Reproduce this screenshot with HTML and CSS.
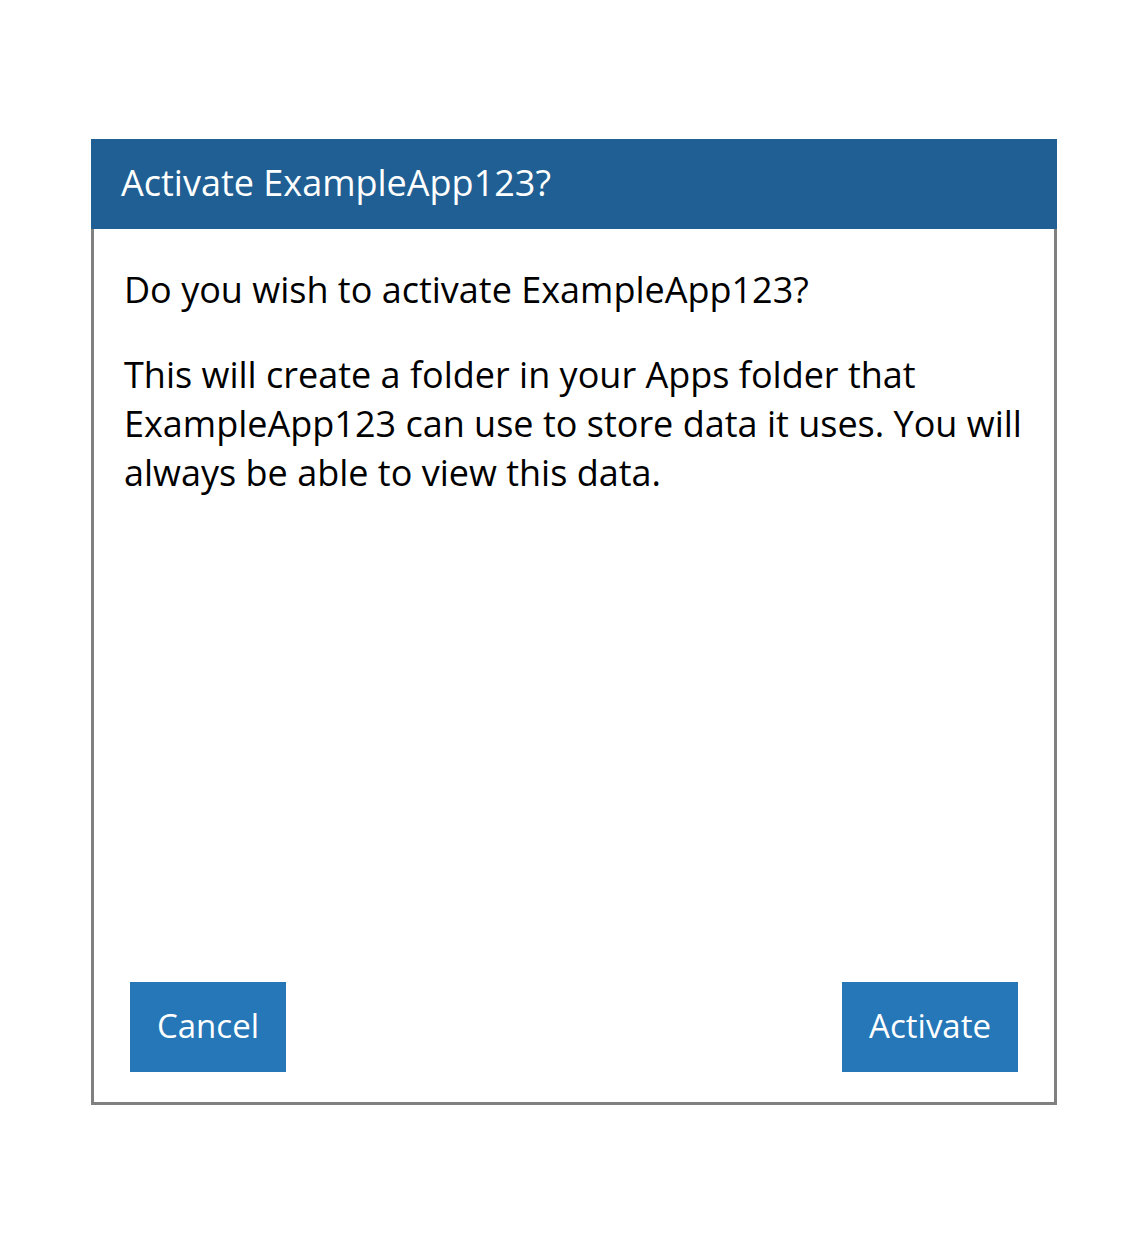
FILE: index.html
```html
<!DOCTYPE html>
<html>
<head>
<meta charset="utf-8">
<link rel="stylesheet" href="styles.css">
</head>
<body>
<div class="dialog">
  <div class="dialog-header">Activate ExampleApp123?</div>
  <div class="dialog-body">
    <div class="dialog-content">
      <p>Do you wish to activate ExampleApp123?</p>
      <p>This will create a folder in your Apps folder that ExampleApp123 can use to store data it uses. You will always be able to view this data.</p>
    </div>
    <div class="dialog-footer">
      <button class="btn">Cancel</button>
      <button class="btn">Activate</button>
    </div>
  </div>
</div>
</body>
</html>
```

FILE: styles.css
```css
html, body {
  margin: 0;
  padding: 0;
  background: #ffffff;
}
body {
  font-family: "Open Sans", "Noto Sans", sans-serif;
  padding: 139px 0 0 91px;
}
.dialog {
  width: 966px;
  height: 966px;
  display: flex;
  flex-direction: column;
}
.dialog-header {
  background: #205f93;
  color: #ffffff;
  font-size: 36px;
  height: 90px;
  box-sizing: border-box;
  padding: 0 30px;
  display: flex;
  align-items: center;
  padding-bottom: 3px;
}
.dialog-body {
  flex: 1;
  border: 3px solid #808080;
  border-top: none;
  display: flex;
  flex-direction: column;
}
.dialog-content {
  padding: 0 30px 0 30px;
  color: #000000;
  font-size: 36px;
}
.dialog-content p {
  margin: 36px 0;
}
.dialog-footer {
  margin-top: auto;
  display: flex;
  justify-content: space-between;
  padding: 0 36px 30px 36px;
}
.btn {
  height: 90px;
  padding: 0 27px 3px 27px;
  background: #2577b8;
  color: #ffffff;
  border: none;
  border-radius: 0;
  font-family: "Open Sans", "Noto Sans", sans-serif;
  font-size: 33px;
}
```
